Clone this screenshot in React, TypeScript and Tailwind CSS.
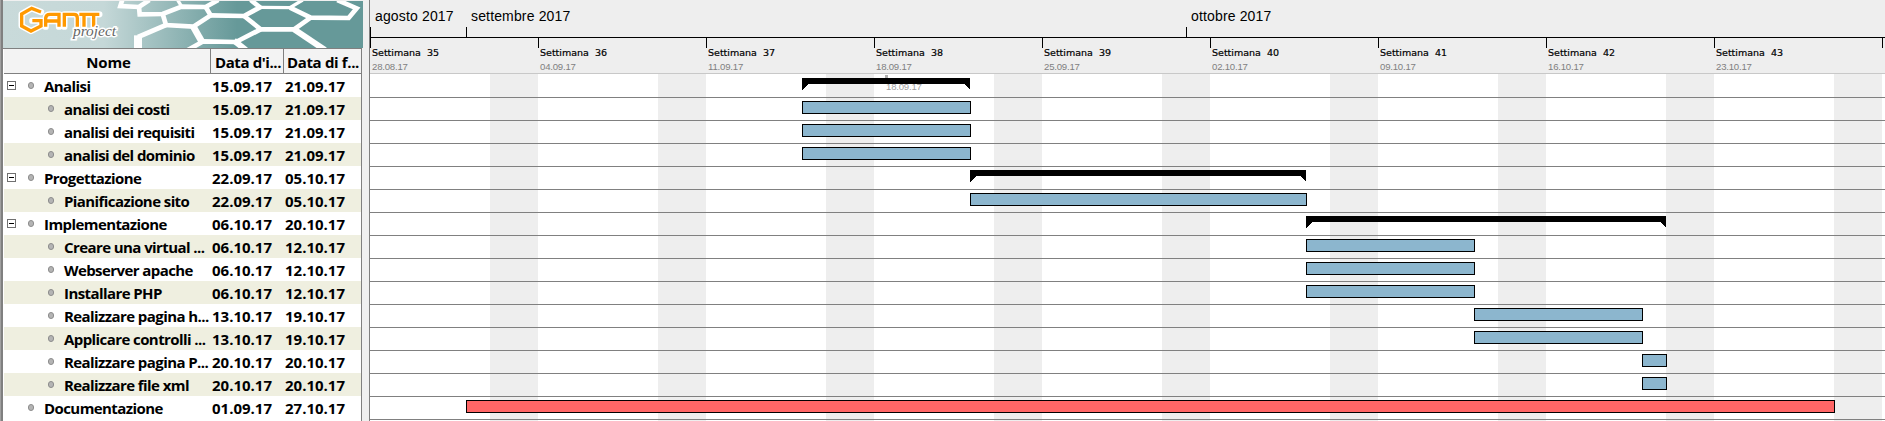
const tasks = [
  { name: 'Analisi', a: '15.09.17', b: '21.09.17', kind: 'group', s: 18, d: 7 },
  { name: 'analisi dei costi', a: '15.09.17', b: '21.09.17', kind: 'child', s: 18, d: 7 },
  { name: 'analisi dei requisiti', a: '15.09.17', b: '21.09.17', kind: 'child', s: 18, d: 7 },
  { name: 'analisi del dominio', a: '15.09.17', b: '21.09.17', kind: 'child', s: 18, d: 7 },
  { name: 'Progettazione', a: '22.09.17', b: '05.10.17', kind: 'group', s: 25, d: 14 },
  { name: 'Pianificazione sito', a: '22.09.17', b: '05.10.17', kind: 'child', s: 25, d: 14 },
  { name: 'Implementazione', a: '06.10.17', b: '20.10.17', kind: 'group', s: 39, d: 15 },
  { name: 'Creare una virtual ...', a: '06.10.17', b: '12.10.17', kind: 'child', s: 39, d: 7 },
  { name: 'Webserver apache', a: '06.10.17', b: '12.10.17', kind: 'child', s: 39, d: 7 },
  { name: 'Installare PHP', a: '06.10.17', b: '12.10.17', kind: 'child', s: 39, d: 7 },
  { name: 'Realizzare pagina h...', a: '13.10.17', b: '19.10.17', kind: 'child', s: 46, d: 7 },
  { name: 'Applicare controlli ...', a: '13.10.17', b: '19.10.17', kind: 'child', s: 46, d: 7 },
  { name: 'Realizzare pagina P...', a: '20.10.17', b: '20.10.17', kind: 'child', s: 53, d: 1 },
  { name: 'Realizzare file xml', a: '20.10.17', b: '20.10.17', kind: 'child', s: 53, d: 1 },
  { name: 'Documentazione', a: '01.09.17', b: '27.10.17', kind: 'solo', s: 4, d: 57 },
];

const weeks = [
  ['35', '28.08.17'], ['36', '04.09.17'], ['37', '11.09.17'], ['38', '18.09.17'], ['39', '25.09.17'],
  ['40', '02.10.17'], ['41', '09.10.17'], ['42', '16.10.17'], ['43', '23.10.17'],
];

const DAY = 24;

const G = 'M123 36L95 25L65 42V78L93 93L123 78V62H97';
const ANTT = 'M137 80V54Q138 43 150 43H177V80M137 63H177M193 80V43H222Q232 43 232 54V80M238 43H298M252 43V80M281 43V80';

function Banner() {
  return (
    <svg className="block shrink-0" width="360" height="47" viewBox="0 0 360 47">
      <defs>
        <linearGradient id="bg" x1="0" x2="1">
          <stop offset="0" stopColor="#c9dada" />
          <stop offset="0.28" stopColor="#c5d8d8" />
          <stop offset="0.65" stopColor="#669999" />
          <stop offset="1" stopColor="#669999" />
        </linearGradient>
      </defs>
      <rect width="360" height="47" fill="url(#bg)" />
      <g transform="translate(-3 -1) scale(0.33333)" fill="none">
        <g stroke="#fff" strokeWidth="14">
          <path d="M368 -4L361 18L417 21L448 0" />
          <path d="M417 21L419 43L488 42L545 20L617 21L655 0" />
          <path d="M545 20L533 0" strokeWidth="10" />
          <path d="M488 42L498 75L580 80L632 46L617 21" />
          <path d="M632 46L732 48L780 22L752 0" />
          <path d="M780 22L870 23L908 0" strokeWidth="10" />
          <path d="M870 23L932 53L1046 54L1070 25L1012 0" />
          <path d="M932 53L882 88L782 88L732 48" />
          <path d="M882 88L975 150" strokeWidth="18" />
          <path d="M782 88L708 126L610 124L560 152" />
          <path d="M580 80L606 126" strokeWidth="20" />
          <path d="M702 122L738 150" strokeWidth="18" />
          <path d="M498 75L414 111" />
          <path d="M414 106V150" strokeWidth="24" />
        </g>
        <g stroke="#fff" strokeWidth="19" strokeLinejoin="round" strokeLinecap="round">
          <path d={G} />
          <path d={ANTT} />
        </g>
        <g stroke="#ff9900" strokeWidth="10">
          <path d={G} />
          <path d={ANTT} />
        </g>
      </g>
      <text x="70" y="35" textLength="43" lengthAdjust="spacingAndGlyphs" className="font-['Liberation_Serif',serif] text-[15px] italic" fill="#666" stroke="#fff" strokeWidth="3" paintOrder="stroke">project</text>
    </svg>
  );
}

function TaskRow({ t, i }: { t: (typeof tasks)[number]; i: number }) {
  return (
    <div className={`flex h-[23px] shrink-0 items-start leading-[24px] ${i % 2 ? 'bg-[#efefe0]' : 'bg-white'}`}>
      <div className="flex w-[208px] shrink-0 items-start whitespace-nowrap">
        <span className="flex w-[24px] shrink-0 pl-[3px] pt-[7px]">
          {t.kind === 'group' && (
            <span className="flex size-[9px] items-center justify-center border border-[#707070] bg-white">
              <span className="h-px w-[5px] bg-black" />
            </span>
          )}
        </span>
        <span className={`flex shrink-0 pt-[8px] ${t.kind === 'child' ? 'w-[36px] pl-[20px]' : 'w-[16px]'}`}>
          <span className="h-[7px] w-[6px] shrink-0 rounded-full border border-[#8c8c8c] bg-[#b4b4b4]" />
        </span>
        <span className="tracking-[-0.58px]">{t.name}</span>
      </div>
      <span className="w-[73px] shrink-0">{t.a}</span>
      <span>{t.b}</span>
    </div>
  );
}

function Summary({ width }: { width: number }) {
  return (
    <svg className="block" width={width} height="12" shapeRendering="crispEdges">
      <path d={`M0 0H${width}V12L${width - 6} 6H6L0 12Z`} />
    </svg>
  );
}

export default function App() {
  return (
    <div className="flex h-[421px] w-[1885px] overflow-hidden bg-[#f0f0f0] font-['Open_Sans','Noto_Sans',sans-serif] text-black">
      <div className="flex w-[369px] shrink-0 border-l border-[#a0a0a0] bg-[#f0f0f0]">
        <div className="flex w-[362px] flex-col border-l-2 border-[#808080] pt-px">
          <Banner />
          <div className="flex w-[359px] grow flex-col border-r border-t border-[#808080] bg-white pl-px text-[15px] font-bold">
            <div className="flex h-[25px] shrink-0 border-b border-[#808080] bg-[#f3f3f3] leading-[27px] whitespace-nowrap">
              <div className="w-[207px] shrink-0 border-r border-[#808080] pl-[3px] text-center tracking-[-0.2px]">Nome</div>
              <div className="w-[73px] shrink-0 border-r border-[#808080] pl-[4px] tracking-[-0.4px]">Data d'i...</div>
              <div className="shrink-0 pl-[3px] tracking-[-0.35px]">Data di f...</div>
            </div>
            {tasks.map((t, i) => <TaskRow key={i} t={t} i={i} />)}
          </div>
        </div>
      </div>
      <div className="flex w-[1516px] shrink-0 flex-col border-l border-[#808080] bg-white font-['Liberation_Sans',sans-serif]">
        <div className="flex h-[74px] shrink-0 flex-col border-b border-[#c8c8c8] bg-[#eeeeee]">
          <div className="flex h-[38px] shrink-0 items-end border-b border-black whitespace-nowrap">
            {[['agosto 2017', 'w-[96px]'], ['settembre 2017', 'w-[720px]'], ['ottobre 2017', 'w-[600px]']].map(([m, w]) => (
              <div key={m} className={`flex h-[37px] flex-col justify-between ${w}`}>
                <span className="pl-[5px] pt-[6px] text-[14px] leading-[20px] tracking-[0.15px]">{m}</span>
                <span className="h-[10px] w-px bg-black" />
              </div>
            ))}
          </div>
          <div className="flex">
            {weeks.map(([n, d]) => (
              <div key={n} className="flex h-[35px] w-[168px] shrink-0 whitespace-pre">
                <span className="h-[10px] w-px bg-black" />
                <div className="flex flex-col">
                  <span className="mt-[8px] h-[15px] pl-px font-['DejaVu_Sans',sans-serif] text-[9.5px] leading-[14px] [-webkit-text-stroke:0.2px_black]">{'Settimana  ' + n}</span>
                  <span className="pl-px text-[9.6px] leading-[14px] tracking-[-0.2px] text-[#808080]">{d}</span>
                </div>
              </div>
            ))}
            <span className="h-[10px] w-px bg-black" />
          </div>
        </div>
        <div className="relative grow overflow-hidden">
          <div className="flex h-full">
            {weeks.map(([n]) => (
              <div key={n} className="flex w-[168px] shrink-0 justify-end"><div className="w-[48px] bg-[#eeeeee]" /></div>
            ))}
          </div>
          <span className="absolute left-[515px] top-[1px] h-[3px] w-[3px] bg-[#b0b0b0]" />
          <span className="absolute left-[516px] top-[6px] text-[9.6px] leading-[14px] tracking-[-0.2px] text-[#a0a0a0]">18.09.17</span>
          <div className="absolute inset-0 flex flex-col pt-px">
            {tasks.map((t, i) => (
              <div key={i} className="h-[23px] shrink-0 border-b border-[#808080] pt-[3px]">
                <div style={{ marginLeft: t.s * DAY, width: t.d * DAY + 1 }}>
                  {t.kind === 'group'
                    ? <Summary width={t.d * DAY} />
                    : <div className={`h-[13px] border border-black ${t.kind === 'solo' ? 'bg-[#ff6666]' : 'bg-[#8cb6ce]'}`} />}
                </div>
              </div>
            ))}
          </div>
        </div>
      </div>
    </div>
  );
}
